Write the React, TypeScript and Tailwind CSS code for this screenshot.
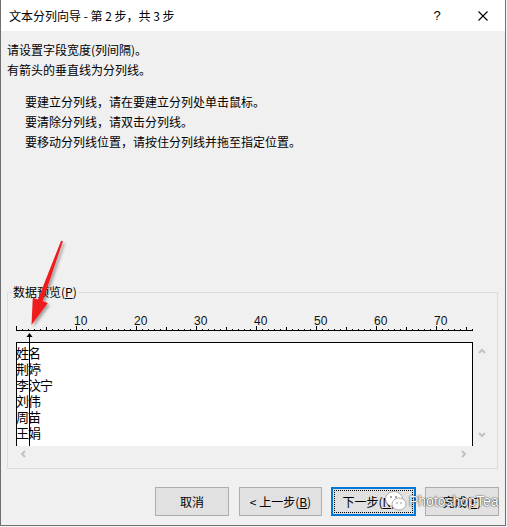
import React from "react";

const ROWS = ["姓名", "荆婷", "李汶宁", "刘伟", "周苗", "王娟"];

function Chevron({ dir }: { dir: "up" | "down" | "left" | "right" }) {
  const pts: Record<string, string> = {
    up: "1,5 4,2 7,5",
    down: "1,2 4,5 7,2",
    left: "5,1 2,4 5,7",
    right: "2,1 5,4 2,7",
  };
  return (
    <svg width="8" height="8" className="block">
      <polyline points={pts[dir]} fill="none" stroke="#c2c2c2" strokeWidth="2" />
    </svg>
  );
}

function Ruler() {
  const ticks = Array.from({ length: 77 }, (_, n) => n);
  return (
    <svg width="460" height="30" className="block ml-[8px] mt-[12px]">
      <line x1="0" y1="18.5" x2="457" y2="18.5" stroke="#000" />
      {ticks.map((n) => {
        const h = n % 10 === 0 ? 4 : n % 5 === 0 ? 3 : 1;
        return <line key={n} x1={6 * n + 0.5} x2={6 * n + 0.5} y1={18} y2={18 - h} stroke="#000" />;
      })}
      {[10, 20, 30, 40, 50, 60, 70].map((v) => (
        <text key={v} x={6 * v - 2} y={13} fontSize="12" fill="#111" fontFamily="'Liberation Sans', Arial, sans-serif">
          {v}
        </text>
      ))}
      <path d="M13.5 21 L10.5 25 L16.5 25 Z" fill="#000" />
      <line x1="13.5" y1="24" x2="13.5" y2="30" stroke="#000" />
    </svg>
  );
}

function Btn({ w, ml, primary, children }: { w: string; ml: string; primary?: boolean; children: React.ReactNode }) {
  return (
    <button
      className={`relative h-[29px] ${w} ${ml} flex items-center justify-center bg-[#e1e1e1] text-[12px] leading-[16px] ${
        primary ? "border-2 border-[#0078d7]" : "border border-[#adadad]"
      }`}
    >
      {primary && <span className="absolute inset-[1px] border border-dotted border-black" />}
      <span className="relative">{children}</span>
    </button>
  );
}

export default function App() {
  return (
    <div className="relative w-[507px] h-[527px] overflow-hidden bg-[#f6f6f6] font-['Noto_Sans_CJK_SC','Noto_Sans',sans-serif] text-[12px] text-black">
      <div className="w-[506px] h-[526px] flex flex-col bg-[#f0f0f0] border-l border-r border-b border-[#6f6f6f]">
        {/* title bar */}
        <div className="h-[31px] shrink-0 bg-white flex items-center pl-[8px]">
          <span className="leading-[16px]">文本分列向导 - 第 2 步，共 3 步</span>
          <span className="ml-auto w-[8px] text-center text-[13px] leading-[16px] font-['Liberation_Sans',sans-serif]">?</span>
          <svg width="10" height="10" className="ml-[37px] mr-[17px] block">
            <path d="M0.5 0.5 L9.5 9.5 M9.5 0.5 L0.5 9.5" stroke="#000" strokeWidth="1.1" />
          </svg>
        </div>

        <div className="pt-[9px] pl-[6px] leading-[20px]">
          <p>请设置字段宽度(列间隔)。</p>
          <p>有箭头的垂直线为分列线。</p>
        </div>
        <div className="mt-[12px] pl-[24px] leading-[20px]">
          <p>要建立分列线，请在要建立分列处单击鼠标。</p>
          <p>要清除分列线，请双击分列线。</p>
          <p>要移动分列线位置，请按住分列线并拖至指定位置。</p>
        </div>

        <fieldset className="mt-[132px] ml-[6px] w-[491px] border border-[#dcdcdc] pb-[6px]">
          <legend className="ml-[4px] px-[1px] leading-[16px]">
            数据预览(<span className="underline">P</span>)
          </legend>
          <Ruler />
          <div className="ml-[8px] grid grid-cols-[457px_17px] grid-rows-[104px_16px]">
            <div className="relative bg-white border-t border-l border-r border-black pt-[2px] text-[13px] leading-[16px] overflow-hidden">
              <div className="ml-[-1px] tracking-[-1px]">
                {ROWS.map((r) => (
                  <p key={r}>{r}</p>
                ))}
              </div>
              <div className="absolute left-[12px] top-0 bottom-0 w-px bg-black" />
            </div>
            <div className="flex flex-col items-center justify-between pt-[6px] pb-[7px]">
              <Chevron dir="up" />
              <Chevron dir="down" />
            </div>
            <div className="flex items-center justify-between pl-[4px] pr-[5px]">
              <Chevron dir="left" />
              <Chevron dir="right" />
            </div>
            <div />
          </div>
        </fieldset>

        <div className="mt-auto flex pb-[9px] pl-[154px]">
          <Btn w="w-[74px]" ml="ml-0">取消</Btn>
          <Btn w="w-[83px]" ml="ml-[10px]">
            &lt; 上一步(<span className="underline">B</span>)
          </Btn>
          <Btn w="w-[85px]" ml="ml-[9px]" primary>
            下一步(<span className="underline">N</span>) &gt;
          </Btn>
          <Btn w="w-[74px]" ml="ml-[9px]">
            完成(<span className="underline">F</span>)
          </Btn>
        </div>
      </div>

      {/* red annotation arrow */}
      <svg width="507" height="527" className="absolute inset-0 pointer-events-none">
        <defs>
          <filter id="sh" x="-50%" y="-50%" width="200%" height="200%">
            <feDropShadow dx="2" dy="2" stdDeviation="1.6" floodColor="#000" floodOpacity="0.35" />
          </filter>
        </defs>
        <polygon
          points="62.9,241.3 42.7,301.2 47.8,303.1 31.5,325 32.8,297.7 37.9,299.6 61.1,240.7"
          fill="#ee1b1b"
          filter="url(#sh)"
        />
      </svg>

      {/* watermark */}
      <div className="absolute left-[384px] top-[489px] flex items-center pointer-events-none">
        <svg width="24" height="24" className="block">
          <ellipse cx="10" cy="10" rx="8.5" ry="7.5" fill="#fff" stroke="#999" strokeWidth="0.8" />
          <ellipse cx="15" cy="15" rx="7" ry="6" fill="#fff" stroke="#999" strokeWidth="0.8" />
          <circle cx="7" cy="8" r="1" fill="#888" />
          <circle cx="12" cy="8" r="1" fill="#888" />
          <circle cx="13" cy="14" r="0.8" fill="#888" />
          <circle cx="17" cy="14" r="0.8" fill="#888" />
        </svg>
        <span className="ml-[1px] text-[14px] text-white font-['Liberation_Sans',sans-serif] [text-shadow:0_0_1px_rgba(0,0,0,0.9),0_0_2px_rgba(0,0,0,0.6)]">
          PhotoshopTea
        </span>
      </div>
    </div>
  );
}
